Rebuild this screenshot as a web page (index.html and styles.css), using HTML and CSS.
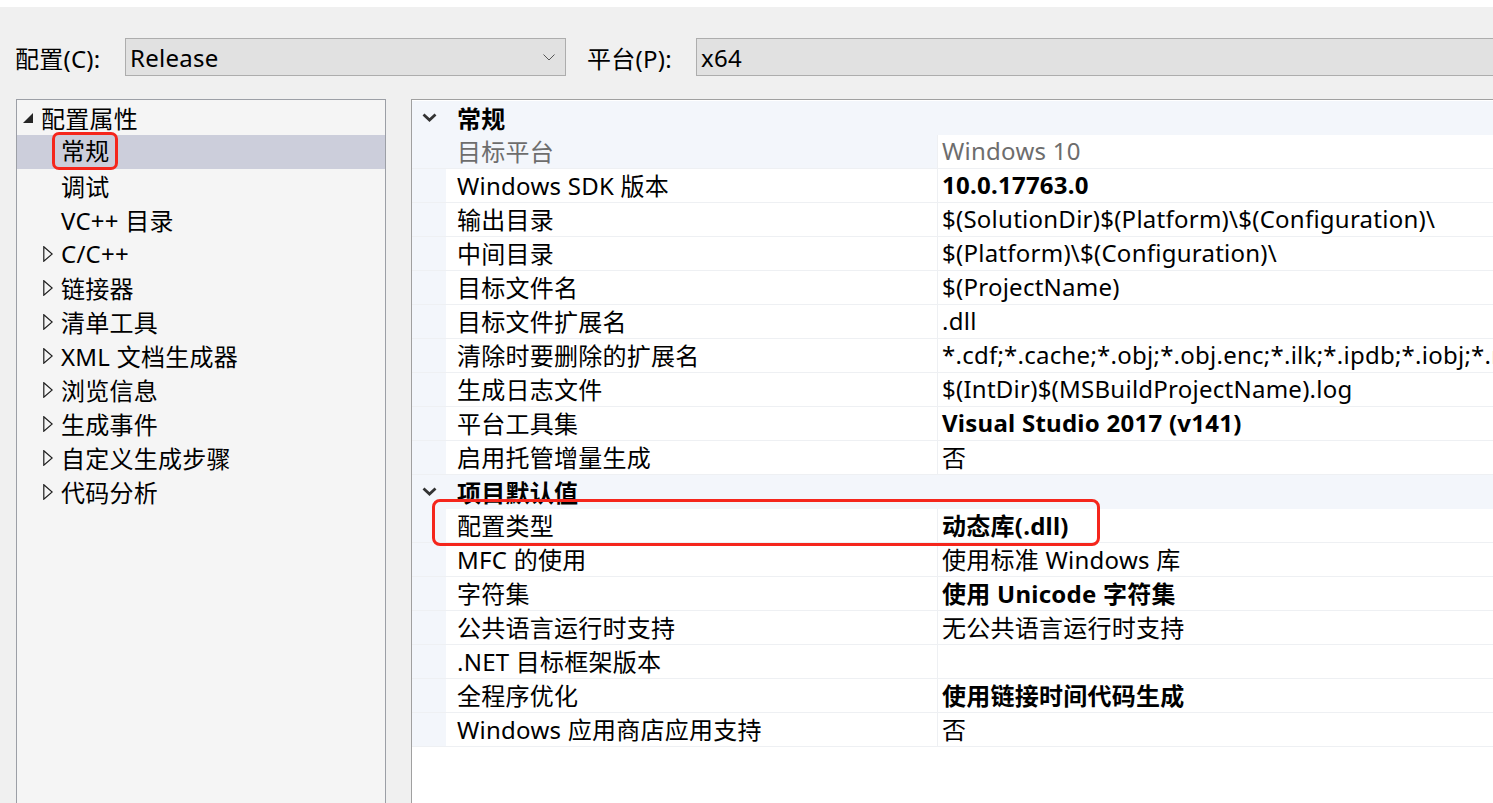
FILE: index.html
```html
<!DOCTYPE html>
<html lang="zh-CN">
<head>
    <meta charset="UTF-8">
    <meta name="viewport" content="width=device-width, initial-scale=1.0">
    <title>属性页</title>
    <link rel="stylesheet" href="styles.css">
</head>
<body>
    <div class="topstrip"></div>
    <div class="toolbar">
        <span class="label">配置(C):</span>
        <div class="combo combo-config">
            <span>Release</span>
            <svg class="chev" width="12" height="7" viewBox="0 0 12 7"><polyline points="0.5,0.5 6,6 11.5,0.5" fill="none" stroke="#555" stroke-width="1"/></svg>
        </div>
        <span class="label label-platform">平台(P):</span>
        <div class="combo combo-platform">
            <span>x64</span>
        </div>
    </div>

    <div class="main">
        <div class="tree">
            <div class="tree-row lvl0">
                <span class="toggle"><svg width="10" height="10" viewBox="0 0 10 10"><polygon points="10,0 10,10 0,10" fill="#262626"/></svg></span>
                <span>配置属性</span>
            </div>
            <div class="tree-row lvl1 selected">
                <span class="toggle"></span>
                <span class="mark">常规</span>
            </div>
            <div class="tree-row lvl1"><span class="toggle"></span><span>调试</span></div>
            <div class="tree-row lvl1"><span class="toggle"></span><span>VC++ 目录</span></div>
            <div class="tree-row lvl1"><span class="toggle"><svg width="10" height="16" viewBox="0 0 10 16"><polygon points="0.8,0.8 9.2,8 0.8,15.2" fill="none" stroke="#1e1e1e" stroke-width="1.2"/></svg></span><span>C/C++</span></div>
            <div class="tree-row lvl1"><span class="toggle"><svg width="10" height="16" viewBox="0 0 10 16"><polygon points="0.8,0.8 9.2,8 0.8,15.2" fill="none" stroke="#1e1e1e" stroke-width="1.2"/></svg></span><span>链接器</span></div>
            <div class="tree-row lvl1"><span class="toggle"><svg width="10" height="16" viewBox="0 0 10 16"><polygon points="0.8,0.8 9.2,8 0.8,15.2" fill="none" stroke="#1e1e1e" stroke-width="1.2"/></svg></span><span>清单工具</span></div>
            <div class="tree-row lvl1"><span class="toggle"><svg width="10" height="16" viewBox="0 0 10 16"><polygon points="0.8,0.8 9.2,8 0.8,15.2" fill="none" stroke="#1e1e1e" stroke-width="1.2"/></svg></span><span>XML 文档生成器</span></div>
            <div class="tree-row lvl1"><span class="toggle"><svg width="10" height="16" viewBox="0 0 10 16"><polygon points="0.8,0.8 9.2,8 0.8,15.2" fill="none" stroke="#1e1e1e" stroke-width="1.2"/></svg></span><span>浏览信息</span></div>
            <div class="tree-row lvl1"><span class="toggle"><svg width="10" height="16" viewBox="0 0 10 16"><polygon points="0.8,0.8 9.2,8 0.8,15.2" fill="none" stroke="#1e1e1e" stroke-width="1.2"/></svg></span><span>生成事件</span></div>
            <div class="tree-row lvl1"><span class="toggle"><svg width="10" height="16" viewBox="0 0 10 16"><polygon points="0.8,0.8 9.2,8 0.8,15.2" fill="none" stroke="#1e1e1e" stroke-width="1.2"/></svg></span><span>自定义生成步骤</span></div>
            <div class="tree-row lvl1"><span class="toggle"><svg width="10" height="16" viewBox="0 0 10 16"><polygon points="0.8,0.8 9.2,8 0.8,15.2" fill="none" stroke="#1e1e1e" stroke-width="1.2"/></svg></span><span>代码分析</span></div>
        </div>

        <div class="grid">
            <div class="cat">
                <span class="gutter"><svg width="15" height="9" viewBox="0 0 15 9"><polyline points="1.5,1.5 7.5,7 13.5,1.5" fill="none" stroke="#333" stroke-width="2.8"/></svg></span>
                <span class="cat-name">常规</span>
            </div>
            <div class="prop readonly"><span class="gutter"></span><span class="name">目标平台</span><span class="value">Windows 10</span></div>
            <div class="prop"><span class="gutter"></span><span class="name">Windows SDK 版本</span><span class="value bold">10.0.17763.0</span></div>
            <div class="prop"><span class="gutter"></span><span class="name">输出目录</span><span class="value">$(SolutionDir)$(Platform)\$(Configuration)\</span></div>
            <div class="prop"><span class="gutter"></span><span class="name">中间目录</span><span class="value">$(Platform)\$(Configuration)\</span></div>
            <div class="prop"><span class="gutter"></span><span class="name">目标文件名</span><span class="value">$(ProjectName)</span></div>
            <div class="prop"><span class="gutter"></span><span class="name">目标文件扩展名</span><span class="value">.dll</span></div>
            <div class="prop"><span class="gutter"></span><span class="name">清除时要删除的扩展名</span><span class="value">*.cdf;*.cache;*.obj;*.obj.enc;*.ilk;*.ipdb;*.iobj;*.res</span></div>
            <div class="prop"><span class="gutter"></span><span class="name">生成日志文件</span><span class="value">$(IntDir)$(MSBuildProjectName).log</span></div>
            <div class="prop"><span class="gutter"></span><span class="name">平台工具集</span><span class="value bold">Visual Studio 2017 (v141)</span></div>
            <div class="prop"><span class="gutter"></span><span class="name">启用托管增量生成</span><span class="value">否</span></div>
            <div class="cat">
                <span class="gutter"><svg width="15" height="9" viewBox="0 0 15 9"><polyline points="1.5,1.5 7.5,7 13.5,1.5" fill="none" stroke="#333" stroke-width="2.8"/></svg></span>
                <span class="cat-name">项目默认值</span>
            </div>
            <div class="prop marked"><span class="gutter"></span><span class="name">配置类型</span><span class="value bold">动态库(.dll)</span></div>
            <div class="prop"><span class="gutter"></span><span class="name">MFC 的使用</span><span class="value">使用标准 Windows 库</span></div>
            <div class="prop"><span class="gutter"></span><span class="name">字符集</span><span class="value bold">使用 Unicode 字符集</span></div>
            <div class="prop"><span class="gutter"></span><span class="name">公共语言运行时支持</span><span class="value">无公共语言运行时支持</span></div>
            <div class="prop"><span class="gutter"></span><span class="name">.NET 目标框架版本</span><span class="value"></span></div>
            <div class="prop"><span class="gutter"></span><span class="name">全程序优化</span><span class="value bold">使用链接时间代码生成</span></div>
            <div class="prop"><span class="gutter"></span><span class="name">Windows 应用商店应用支持</span><span class="value">否</span></div>
        </div>
    </div>
</body>
</html>
```

FILE: styles.css
```css
html, body
{
    margin: 0;
    height: 100%;
    overflow: hidden;
}
body
{
    background-color: #f0f0f0;
    font-family: "Noto Sans", "Noto Sans CJK SC", sans-serif;
    font-size: 24px;
    letter-spacing: 0.25px;
    color: #000;
}
.topstrip
{
    height: 7px;
    background-color: #fff;
}
.toolbar
{
    display: flex;
    align-items: center;
    margin-top: 31px;
    height: 38px;
}
.label
{
    flex: none;
    width: 125px;
    padding-left: 15px;
    box-sizing: border-box;
}
.label-platform
{
    width: 109px;
    padding-left: 0;
    margin-left: 21px;
}
.combo
{
    height: 38px;
    box-sizing: border-box;
    background-color: #e1e1e1;
    border: 1px solid #adadad;
    display: flex;
    align-items: center;
    padding-left: 4px;
}
.combo-config
{
    flex: none;
    width: 441px;
    justify-content: space-between;
    padding-right: 10px;
}
.combo-platform
{
    flex: 1;
    border-right: none;
}
.main
{
    display: flex;
    margin-top: 23px;
    height: calc(100% - 99px);
}
.tree
{
    flex: none;
    width: 370px;
    margin-left: 16px;
    box-sizing: border-box;
    border: 1px solid #9c9fa6;
    border-bottom: none;
    background-color: #f5f5f5;
    padding-top: 1px;
}
.tree-row
{
    display: flex;
    align-items: center;
    height: 34px;
    padding-bottom: 2px;
    box-sizing: border-box;
    white-space: nowrap;
}
.toggle
{
    display: flex;
    align-items: center;
    flex: none;
}
.lvl0
{
    padding-left: 6px;
}
.lvl0 .toggle
{
    width: 18px;
    padding-top: 2px;
}
.lvl1
{
    padding-left: 26px;
}
.lvl1 .toggle
{
    width: 18px;
    padding-top: 2px;
}
.selected
{
    background-color: #cccedb;
}
.mark
{
    position: relative;
    line-height: 32px;
}
.mark::after
{
    content: "";
    position: absolute;
    left: -9px;
    right: -8px;
    top: -3px;
    bottom: -3px;
    border: 3px solid #f5261c;
    border-radius: 7px;
}
.grid
{
    flex: 1;
    min-width: 0;
    margin-left: 25px;
    border-top: 1px solid #a0a0a0;
    border-left: 1px solid #a0a0a0;
    background-color: #fff;
    padding-top: 1px;
}
.cat, .prop
{
    display: flex;
    height: 34px;
    white-space: nowrap;
}
.cat
{
    background-color: #f3f6fb;
    align-items: center;
    padding-bottom: 2px;
    box-sizing: border-box;
}
.gutter
{
    width: 34px;
    flex: none;
    align-self: stretch;
    background-color: #f3f6fb;
    display: flex;
    align-items: center;
    justify-content: center;
}
.cat-name
{
    padding-left: 11px;
    font-weight: bold;
}
.prop
{
    position: relative;
    box-sizing: border-box;
    border-bottom: 1px solid #eef0f3;
}
.name
{
    width: 492px;
    flex: none;
    box-sizing: border-box;
    padding-left: 11px;
    padding-bottom: 2px;
    border-right: 1px solid #eef0f3;
    display: flex;
    align-items: center;
}
.value
{
    flex: 1;
    min-width: 0;
    padding-left: 4px;
    padding-bottom: 2px;
    overflow: hidden;
    display: flex;
    align-items: center;
}
.bold
{
    font-weight: bold;
}
.readonly .name
{
    background-color: #f3f6fb;
    color: #6d6d6d;
}
.readonly .value
{
    color: #6d6d6d;
}
.marked
{
    z-index: 1;
}
.marked::after
{
    content: "";
    position: absolute;
    left: 20px;
    width: 668px;
    top: -10px;
    bottom: -4px;
    border: 3px solid #f5261c;
    border-radius: 8px;
    box-sizing: border-box;
}
```
